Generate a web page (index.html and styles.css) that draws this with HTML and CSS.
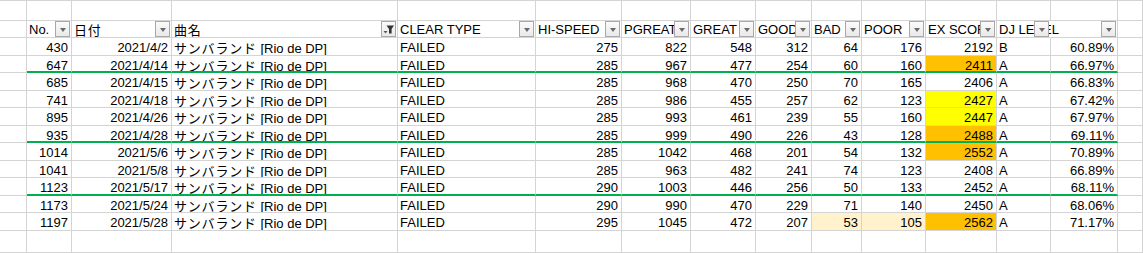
FILE: index.html
```html
<!DOCTYPE html>
<html lang="ja">
<head>
<meta charset="utf-8">
<title>Sheet</title>
<link rel="stylesheet" href="styles.css">
</head>
<body>
<div class="sheet">
  <div class="row r0">
    <div class="c"></div><div class="c"></div><div class="c"></div><div class="c"></div><div class="c"></div><div class="c"></div><div class="c"></div><div class="c"></div><div class="c"></div><div class="c"></div><div class="c"></div><div class="c"></div><div class="c"></div><div class="c"></div><div class="c"></div>
  </div>
  <div class="row hdr">
    <div class="c"></div>
    <div class="c h"><span class="t">No.</span><span class="btn"></span></div>
    <div class="c h"><span class="t jp">日付</span><span class="btn"></span></div>
    <div class="c h"><span class="t jp">曲名</span><span class="btn flt"><svg width="13" height="14" viewBox="0 0 13 14"><polygon points="1.5,9 5.5,9 3.5,11.5" fill="#555"/><polygon points="4.5,3.5 12,3.5 9.6,7 9.6,11.5 7,11.5 7,7" fill="#333"/></svg></span></div>
    <div class="c h"><span class="t">CLEAR TYPE</span><span class="btn"></span></div>
    <div class="c h"><span class="t">HI-SPEED</span><span class="btn"></span></div>
    <div class="c h"><span class="t">PGREAT</span><span class="btn"></span></div>
    <div class="c h"><span class="t">GREAT</span><span class="btn"></span></div>
    <div class="c h"><span class="t">GOOD</span><span class="btn"></span></div>
    <div class="c h"><span class="t">BAD</span><span class="btn"></span></div>
    <div class="c h"><span class="t">POOR</span><span class="btn"></span></div>
    <div class="c h"><span class="t">EX SCORE</span><span class="btn"></span></div>
    <div class="c h over"><span class="t">DJ LEVEL</span><span class="btn"></span></div>
    <div class="c h"><span class="btn"></span></div>
    <div class="c"></div>
  </div>

  <div class="row">
    <div class="c"></div><div class="c n">430</div><div class="c n">2021/4/2</div><div class="c"><span class="jp">サンバランド</span> [Rio de DP]</div><div class="c">FAILED</div><div class="c n">275</div><div class="c n">822</div><div class="c n">548</div><div class="c n">312</div><div class="c n">64</div><div class="c n">176</div><div class="c n">2192</div><div class="c">B</div><div class="c n">60.89%</div><div class="c"></div>
  </div>
  <div class="row sep">
    <div class="c"></div><div class="c n">647</div><div class="c n">2021/4/14</div><div class="c"><span class="jp">サンバランド</span> [Rio de DP]</div><div class="c">FAILED</div><div class="c n">285</div><div class="c n">967</div><div class="c n">477</div><div class="c n">254</div><div class="c n">60</div><div class="c n">160</div><div class="c n orange">2411</div><div class="c">A</div><div class="c n">66.97%</div><div class="c"></div>
  </div>
  <div class="row">
    <div class="c"></div><div class="c n">685</div><div class="c n">2021/4/15</div><div class="c"><span class="jp">サンバランド</span> [Rio de DP]</div><div class="c">FAILED</div><div class="c n">285</div><div class="c n">968</div><div class="c n">470</div><div class="c n">250</div><div class="c n">70</div><div class="c n">165</div><div class="c n">2406</div><div class="c">A</div><div class="c n">66.83%</div><div class="c"></div>
  </div>
  <div class="row">
    <div class="c"></div><div class="c n">741</div><div class="c n">2021/4/18</div><div class="c"><span class="jp">サンバランド</span> [Rio de DP]</div><div class="c">FAILED</div><div class="c n">285</div><div class="c n">986</div><div class="c n">455</div><div class="c n">257</div><div class="c n">62</div><div class="c n">123</div><div class="c n yellow">2427</div><div class="c">A</div><div class="c n">67.42%</div><div class="c"></div>
  </div>
  <div class="row">
    <div class="c"></div><div class="c n">895</div><div class="c n">2021/4/26</div><div class="c"><span class="jp">サンバランド</span> [Rio de DP]</div><div class="c">FAILED</div><div class="c n">285</div><div class="c n">993</div><div class="c n">461</div><div class="c n">239</div><div class="c n">55</div><div class="c n">160</div><div class="c n yellow">2447</div><div class="c">A</div><div class="c n">67.97%</div><div class="c"></div>
  </div>
  <div class="row sep">
    <div class="c"></div><div class="c n">935</div><div class="c n">2021/4/28</div><div class="c"><span class="jp">サンバランド</span> [Rio de DP]</div><div class="c">FAILED</div><div class="c n">285</div><div class="c n">999</div><div class="c n">490</div><div class="c n">226</div><div class="c n">43</div><div class="c n">128</div><div class="c n orange">2488</div><div class="c">A</div><div class="c n">69.11%</div><div class="c"></div>
  </div>
  <div class="row">
    <div class="c"></div><div class="c n">1014</div><div class="c n">2021/5/6</div><div class="c"><span class="jp">サンバランド</span> [Rio de DP]</div><div class="c">FAILED</div><div class="c n">285</div><div class="c n">1042</div><div class="c n">468</div><div class="c n">201</div><div class="c n">54</div><div class="c n">132</div><div class="c n orange">2552</div><div class="c">A</div><div class="c n">70.89%</div><div class="c"></div>
  </div>
  <div class="row">
    <div class="c"></div><div class="c n">1041</div><div class="c n">2021/5/8</div><div class="c"><span class="jp">サンバランド</span> [Rio de DP]</div><div class="c">FAILED</div><div class="c n">285</div><div class="c n">963</div><div class="c n">482</div><div class="c n">241</div><div class="c n">74</div><div class="c n">123</div><div class="c n">2408</div><div class="c">A</div><div class="c n">66.89%</div><div class="c"></div>
  </div>
  <div class="row sep">
    <div class="c"></div><div class="c n">1123</div><div class="c n">2021/5/17</div><div class="c"><span class="jp">サンバランド</span> [Rio de DP]</div><div class="c">FAILED</div><div class="c n">290</div><div class="c n">1003</div><div class="c n">446</div><div class="c n">256</div><div class="c n">50</div><div class="c n">133</div><div class="c n">2452</div><div class="c">A</div><div class="c n">68.11%</div><div class="c"></div>
  </div>
  <div class="row">
    <div class="c"></div><div class="c n">1173</div><div class="c n">2021/5/24</div><div class="c"><span class="jp">サンバランド</span> [Rio de DP]</div><div class="c">FAILED</div><div class="c n">290</div><div class="c n">990</div><div class="c n">470</div><div class="c n">229</div><div class="c n">71</div><div class="c n">140</div><div class="c n">2450</div><div class="c">A</div><div class="c n">68.06%</div><div class="c"></div>
  </div>
  <div class="row">
    <div class="c"></div><div class="c n">1197</div><div class="c n">2021/5/28</div><div class="c"><span class="jp">サンバランド</span> [Rio de DP]</div><div class="c">FAILED</div><div class="c n">295</div><div class="c n">1045</div><div class="c n">472</div><div class="c n">207</div><div class="c n cream">53</div><div class="c n cream">105</div><div class="c n orange">2562</div><div class="c">A</div><div class="c n">71.17%</div><div class="c"></div>
  </div>
  <div class="row last">
    <div class="c"></div><div class="c"></div><div class="c"></div><div class="c"></div><div class="c"></div><div class="c"></div><div class="c"></div><div class="c"></div><div class="c"></div><div class="c"></div><div class="c"></div><div class="c"></div><div class="c"></div><div class="c"></div><div class="c"></div>
  </div>
</div>
</body>
</html>
```

FILE: styles.css
```css
html, body {
  margin: 0;
  padding: 0;
  background: #ffffff;
}

.sheet {
  width: 1143px;
  height: 253px;
  overflow: hidden;
  box-sizing: border-box;
  border-top: 1px solid #d4d4d4;
  font-family: "Liberation Sans", Arial, "Noto Sans CJK JP", sans-serif;
  font-size: 13px;
  color: #000000;
}

.row {
  display: grid;
  grid-template-columns: 27px 45px 100px 226px 138px 86px 69px 65px 56px 50px 64px 71px 54px 67px 25px;
  height: 17.5px;
}

.row.r0 { height: 20px; }
.row.hdr { height: 17px; }
.row.last { height: 22px; }

.c {
  box-sizing: border-box;
  border-right: 1px solid #d4d4d4;
  border-bottom: 1px solid #d4d4d4;
  padding: 2px 3px 0 2px;
  white-space: nowrap;
  overflow: hidden;
  line-height: 15px;
  position: relative;
}

.c.n { text-align: right; }

.row.hdr .c { padding-top: 1px; }

.row.sep .c:not(:first-child):not(:last-child) {
  border-bottom: 2px solid #00b050;
}

.jp {
  font-family: "Noto Sans CJK JP", sans-serif;
  font-size: 13px;
  letter-spacing: 0.8px;
}

.orange { background: #ffc000; }
.yellow { background: #ffff00; }
.cream { background: #fff2cc; }

.h .t { position: relative; z-index: 0; }
.h.over { overflow: visible; border-right-color: transparent; z-index: 2; }

.btn {
  position: absolute;
  right: 1px;
  top: 0;
  width: 15px;
  height: 16px;
  box-sizing: border-box;
  border: 1px solid #a9a9a9;
  background: linear-gradient(#fbfbfb, #e9e9e9);
  z-index: 1;
  display: flex;
  align-items: center;
  justify-content: center;
}

.btn::after {
  content: "";
  width: 0;
  height: 0;
  border-left: 3.5px solid transparent;
  border-right: 3.5px solid transparent;
  border-top: 4px solid #6a6a6a;
  margin-top: 1px;
}

.btn.flt::after { display: none; }
.btn.flt svg { display: block; }
```
